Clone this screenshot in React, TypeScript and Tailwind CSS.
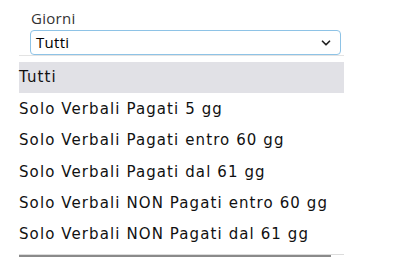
import { ChevronDown } from "lucide-react";

const options: string[] = [
  "Tutti",
  "Solo Verbali Pagati 5 gg",
  "Solo Verbali Pagati entro 60 gg",
  "Solo Verbali Pagati dal 61 gg",
  "Solo Verbali NON Pagati entro 60 gg",
  "Solo Verbali NON Pagati dal 61 gg",
];

const App = () => {
  return <div className="w-[400px] h-[275px] bg-white relative">
    <div className="pt-[9px] pl-[30px] w-[341px]">
      <label className="block text-[15px] leading-[19px] text-[#333] pl-[1px] tracking-[0.3px] font-['Open_Sans',sans-serif]">Giorni</label>
      <div className="mt-[2px] h-[25px] border border-[#8ec3e6] rounded-[4px] flex items-center justify-between pl-[5px] pr-[7px] font-['Open_Sans',sans-serif] text-[15px] text-black">
        <span className="tracking-[0.3px]">Tutti</span>
        <ChevronDown size={14} strokeWidth={3} className="text-[#222]" />
      </div>
    </div>
    <div className="absolute left-[19px] top-[55px] w-[325px] bg-white border-t border-[#e3e3e3] pt-[6px]">
      <ul className="font-['DejaVu_Sans',sans-serif] text-[15px] tracking-[1.1px] text-[#111]">
        {options.map((opt, i) => (
          <li key={opt} className={"h-[31.4px] flex items-center " + (i === 0 ? "bg-[#e1e1e6]" : "")}>
            {opt}
          </li>
        ))}
      </ul>
      <div className="mt-[4px] h-[1px] bg-[#dcdcdc]" />
      <div className="h-[2px] w-[312px] bg-[#8a8a8a]" />
    </div>
  </div>
}

export default App;
